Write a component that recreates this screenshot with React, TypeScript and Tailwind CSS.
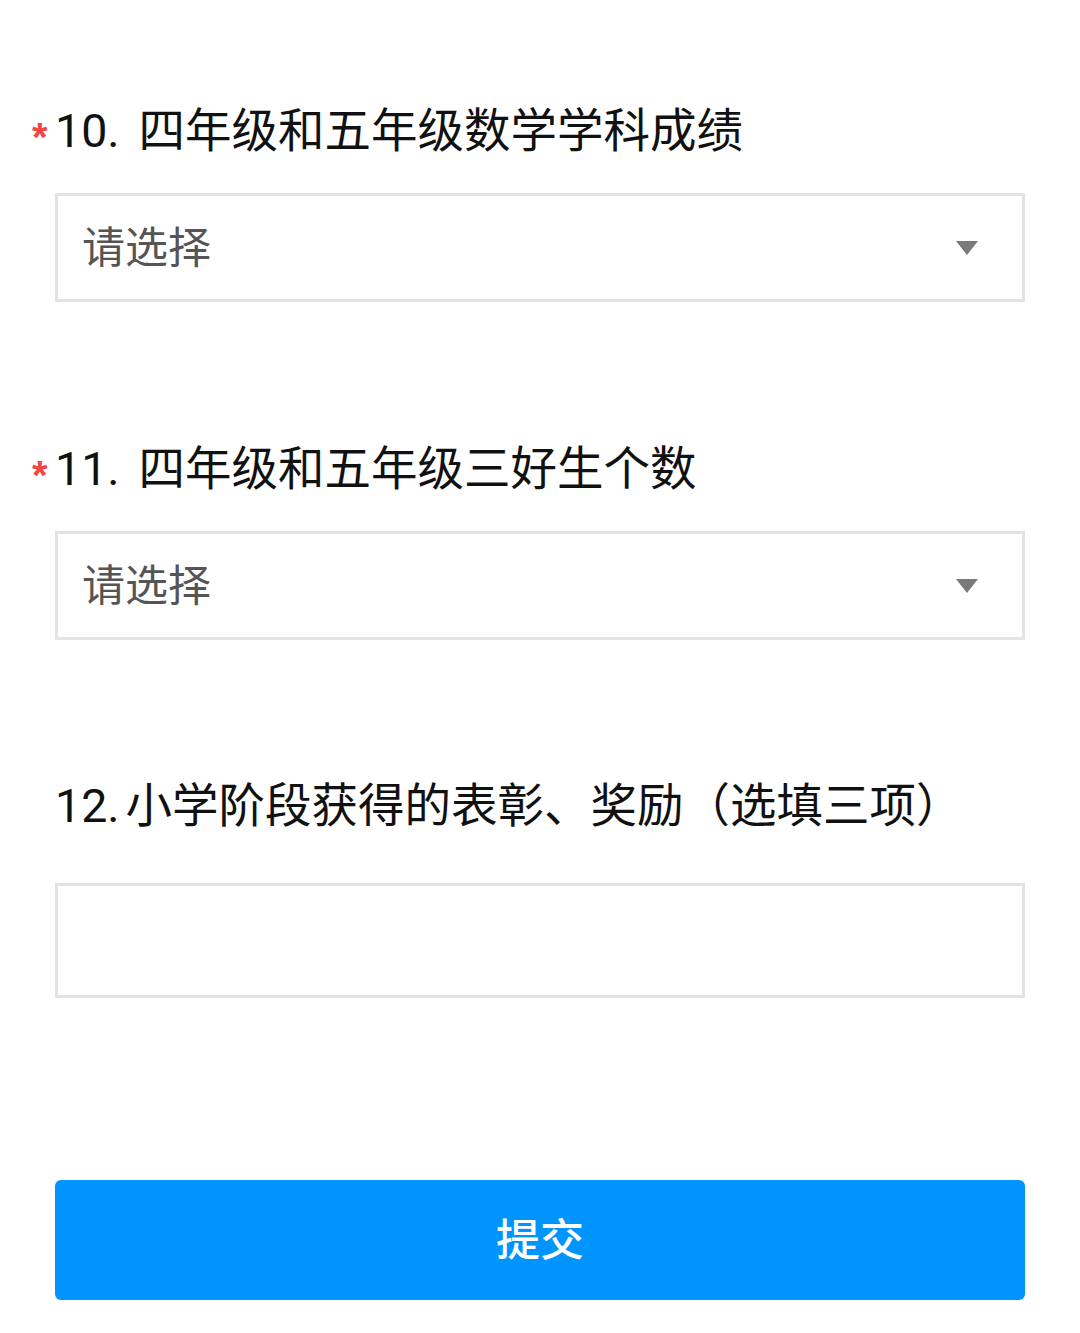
const FONT = { fontFamily: '"Noto Sans CJK SC", "Noto Sans", sans-serif' };

function Caret() {
  return (
    <svg width="22" height="14" viewBox="0 0 22 14" className="shrink-0">
      <path d="M0 0 H22 L11 14 Z" fill="#7a7a7a" />
    </svg>
  );
}

function Label({ num, text, required }: { num: string; text: string; required?: boolean }) {
  return (
    <div className={required ? "-ml-[23px] flex h-[64px] items-center" : "flex h-[64px] items-center"}>
      {required && (
        <span className="w-[23px] translate-y-[10px] font-['Liberation_Sans',sans-serif] text-[40px] leading-[40px] font-bold text-[#f04545]">
          *
        </span>
      )}
      <span className="translate-y-[2px] text-[46.5px] leading-[64px] text-[#111]">
        <span className="font-['Roboto','Noto_Sans',sans-serif]">{num}</span>
        <span className={required ? "ml-[19px]" : "ml-[6px]"}>{text}</span>
      </span>
    </div>
  );
}

function SelectBox() {
  return (
    <div className="mt-[34px] flex h-[109px] items-center justify-between border-[3px] border-[#e3e3e3] pl-[24px] pr-[44px]">
      <span className="mb-[6px] text-[43px] text-[#555]">请选择</span>
      <Caret />
    </div>
  );
}

export default function App() {
  return (
    <div className="min-h-[1333px] bg-white px-[55px] pt-[95px]" style={FONT}>
      <Label required num="10." text="四年级和五年级数学学科成绩" />
      <SelectBox />

      <div className="mt-[131px]">
        <Label required num="11." text="四年级和五年级三好生个数" />
        <SelectBox />
      </div>

      <div className="mt-[130px]">
        <Label num="12." text="小学阶段获得的表彰、奖励（选填三项）" />
        <div className="mt-[49px] h-[115px] border-[3px] border-[#e3e3e3]" />
      </div>

      <button className="mt-[182px] flex h-[120px] w-full items-center justify-center rounded-[6px] bg-[#0094ff] pb-[6px] text-[44px] font-medium text-white">
        提交
      </button>
    </div>
  );
}
